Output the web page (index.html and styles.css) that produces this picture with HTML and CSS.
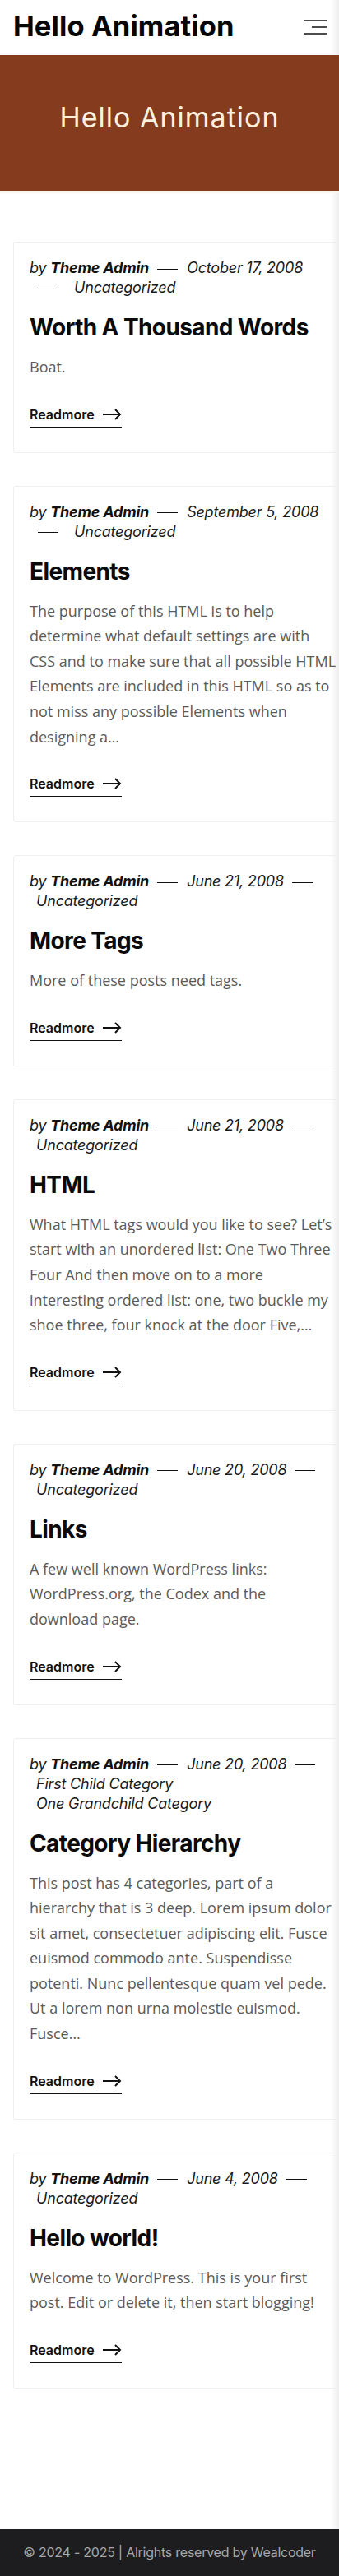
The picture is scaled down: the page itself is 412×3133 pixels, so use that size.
FILE: index.html
```html
<!DOCTYPE html>
<html lang="en">
<head>
<meta charset="utf-8">
<meta name="viewport" content="width=device-width, initial-scale=1">
<title>Hello Animation</title>
<link rel="stylesheet" href="styles.css">
</head>
<body>
<header class="site-header">
  <a class="site-title" href="#">Hello Animation</a>
  <button class="menu-toggle" aria-label="Menu">
    <svg width="28" height="18" viewBox="0 0 28 18" aria-hidden="true">
      <line x1="0" y1="1" x2="28" y2="1" />
      <line x1="10" y1="9" x2="28" y2="9" />
      <line x1="0" y1="17" x2="28" y2="17" />
    </svg>
  </button>
</header>

<section class="hero">
  <h1 class="hero-title">Hello Animation</h1>
</section>

<main class="posts">
  <article class="card">
    <div class="meta"><span class="by">by <b>Theme Admin</b></span><span class="sep"></span><span class="date">October 17, 2008</span><span class="sep"></span><span class="cats"><a href="#">Uncategorized</a></span></div>
    <h2 class="card-title">Worth A Thousand Words</h2>
    <p class="excerpt">Boat.</p>
    <a class="readmore" href="#">Readmore <svg width="23" height="14" viewBox="0 0 23 14" aria-hidden="true"><path d="M0 7H21M15 1L21 7L15 13" /></svg></a>
  </article>

  <article class="card">
    <div class="meta"><span class="by">by <b>Theme Admin</b></span><span class="sep"></span><span class="date">September 5, 2008</span><span class="sep"></span><span class="cats"><a href="#">Uncategorized</a></span></div>
    <h2 class="card-title">Elements</h2>
    <p class="excerpt">The purpose of this HTML is to help determine what default settings are with CSS and to make sure that all possible HTML Elements are included in this HTML so as to not miss any possible Elements when designing a…</p>
    <a class="readmore" href="#">Readmore <svg width="23" height="14" viewBox="0 0 23 14" aria-hidden="true"><path d="M0 7H21M15 1L21 7L15 13" /></svg></a>
  </article>

  <article class="card">
    <div class="meta"><span class="by">by <b>Theme Admin</b></span><span class="sep"></span><span class="date">June 21, 2008</span><span class="sep"></span><span class="cats"><a href="#">Uncategorized</a></span></div>
    <h2 class="card-title">More Tags</h2>
    <p class="excerpt">More of these posts need tags.</p>
    <a class="readmore" href="#">Readmore <svg width="23" height="14" viewBox="0 0 23 14" aria-hidden="true"><path d="M0 7H21M15 1L21 7L15 13" /></svg></a>
  </article>

  <article class="card">
    <div class="meta"><span class="by">by <b>Theme Admin</b></span><span class="sep"></span><span class="date">June 21, 2008</span><span class="sep"></span><span class="cats"><a href="#">Uncategorized</a></span></div>
    <h2 class="card-title">HTML</h2>
    <p class="excerpt">What HTML tags would you like to see? Let’s start with an unordered list: One Two Three Four And then move on to a more interesting ordered list: one, two buckle my shoe three, four knock at the door Five,…</p>
    <a class="readmore" href="#">Readmore <svg width="23" height="14" viewBox="0 0 23 14" aria-hidden="true"><path d="M0 7H21M15 1L21 7L15 13" /></svg></a>
  </article>

  <article class="card">
    <div class="meta"><span class="by">by <b>Theme Admin</b></span><span class="sep"></span><span class="date">June 20, 2008</span><span class="sep"></span><span class="cats"><a href="#">Uncategorized</a></span></div>
    <h2 class="card-title">Links</h2>
    <p class="excerpt">A few well known WordPress links: WordPress.org, the Codex and the download page.</p>
    <a class="readmore" href="#">Readmore <svg width="23" height="14" viewBox="0 0 23 14" aria-hidden="true"><path d="M0 7H21M15 1L21 7L15 13" /></svg></a>
  </article>

  <article class="card">
    <div class="meta"><span class="by">by <b>Theme Admin</b></span><span class="sep"></span><span class="date">June 20, 2008</span><span class="sep"></span><span class="cats"><a href="#">First Child Category</a><a href="#">One Grandchild Category</a></span></div>
    <h2 class="card-title">Category Hierarchy</h2>
    <p class="excerpt">This post has 4 categories, part of a hierarchy that is 3 deep. Lorem ipsum dolor sit amet, consectetuer adipiscing elit. Fusce euismod commodo ante. Suspendisse potenti. Nunc pellentesque quam vel pede. Ut a lorem non urna molestie euismod. Fusce…</p>
    <a class="readmore" href="#">Readmore <svg width="23" height="14" viewBox="0 0 23 14" aria-hidden="true"><path d="M0 7H21M15 1L21 7L15 13" /></svg></a>
  </article>

  <article class="card">
    <div class="meta"><span class="by">by <b>Theme Admin</b></span><span class="sep"></span><span class="date">June 4, 2008</span><span class="sep"></span><span class="cats"><a href="#">Uncategorized</a></span></div>
    <h2 class="card-title">Hello world!</h2>
    <p class="excerpt">Welcome to WordPress. This is your first post. Edit or delete it, then start blogging!</p>
    <a class="readmore" href="#">Readmore <svg width="23" height="14" viewBox="0 0 23 14" aria-hidden="true"><path d="M0 7H21M15 1L21 7L15 13" /></svg></a>
  </article>
</main>

<footer class="site-footer">
  <p class="copyright">© 2024 - 2025 | Alrights reserved by Wealcoder</p>
</footer>
</body>
</html>
```

FILE: styles.css
```css
* {
  box-sizing: border-box;
}

html, body {
  margin: 0;
  padding: 0;
}

body {
  font-family: Inter, "Noto Sans", "Liberation Sans", sans-serif;
  color: #111;
  background: #fff;
  overflow-x: hidden;
}

a {
  color: inherit;
  text-decoration: none;
}

/* Header */
.site-header {
  height: 67px;
  display: flex;
  align-items: center;
  justify-content: space-between;
  padding: 0 15px 0 16px;
  background: linear-gradient(90deg, #fff 0, #fff 402px, #eeeeee 412px);
}

.site-title {
  font-size: 34.5px;
  font-weight: 700;
  letter-spacing: 0.1px;
  line-height: 1;
  color: #050505;
  padding-bottom: 2px;
}

.menu-toggle {
  display: flex;
  align-items: center;
  border: 0;
  padding: 0;
  background: none;
  margin-bottom: 2px;
}

.menu-toggle svg line {
  stroke: #111;
  stroke-width: 1.5;
}

/* Hero */
.hero {
  height: 168px;
  background: #843b1e;
  border-bottom: 3px solid #f8f4ee;
  display: flex;
  align-items: center;
  justify-content: center;
  padding-bottom: 12px;
}

.hero-title {
  margin: 0;
  font-size: 34px;
  font-weight: 400;
  line-height: 1.2;
  color: #fdf0dc;
  letter-spacing: 1px;
}

/* Posts */
.posts {
  padding: 59px 0 171px 16px;
  overflow: hidden;
  display: flex;
  flex-direction: column;
  gap: 40px;
  background: linear-gradient(90deg, #fff 0, #fff 402px, #eeeeee 412px);
}

.card {
  width: 414.5px;
  flex: none;
  border: 1px solid #efefef;
  border-radius: 3px;
  padding: 19px 20px 30px 19px;
}

.meta {
  font-size: 18px;
  line-height: 24px;
  font-style: italic;
  letter-spacing: -0.2px;
  color: #1a1a1a;
}

.meta b {
  font-weight: 700;
  color: #111;
}

.sep {
  display: inline-block;
  width: 25px;
  height: 1px;
  background: #111;
  vertical-align: middle;
  margin: 0 11px 0 10px;
}

.cats a {
  display: inline-block;
  margin-left: 8px;
}

.card-title {
  margin: 19px 0 0;
  font-size: 28px;
  line-height: 34px;
  font-weight: 700;
  color: #0a0a0a;
  letter-spacing: -0.6px;
}

.excerpt {
  margin: 16px 0 0;
  font-family: "Open Sans", "Noto Sans", sans-serif;
  font-size: 18px;
  line-height: 1.7;
  letter-spacing: 0;
  color: #5a5a5a;
}

.readmore {
  margin-top: 30px;
  display: inline-flex;
  align-items: center;
  gap: 10px;
  font-size: 16px;
  line-height: 24px;
  font-weight: 600;
  color: #111;
  padding-bottom: 3px;
  border-bottom: 1px solid #111;
}

.readmore svg path {
  fill: none;
  stroke: #111;
  stroke-width: 2;
}

/* Footer */
.site-footer {
  background: #1d1d20;
  padding: 14px 0;
}

.copyright {
  margin: 0;
  text-align: center;
  font-size: 16px;
  line-height: 29px;
  letter-spacing: -0.25px;
  color: #a8a8a8;
  white-space: nowrap;
}
```
